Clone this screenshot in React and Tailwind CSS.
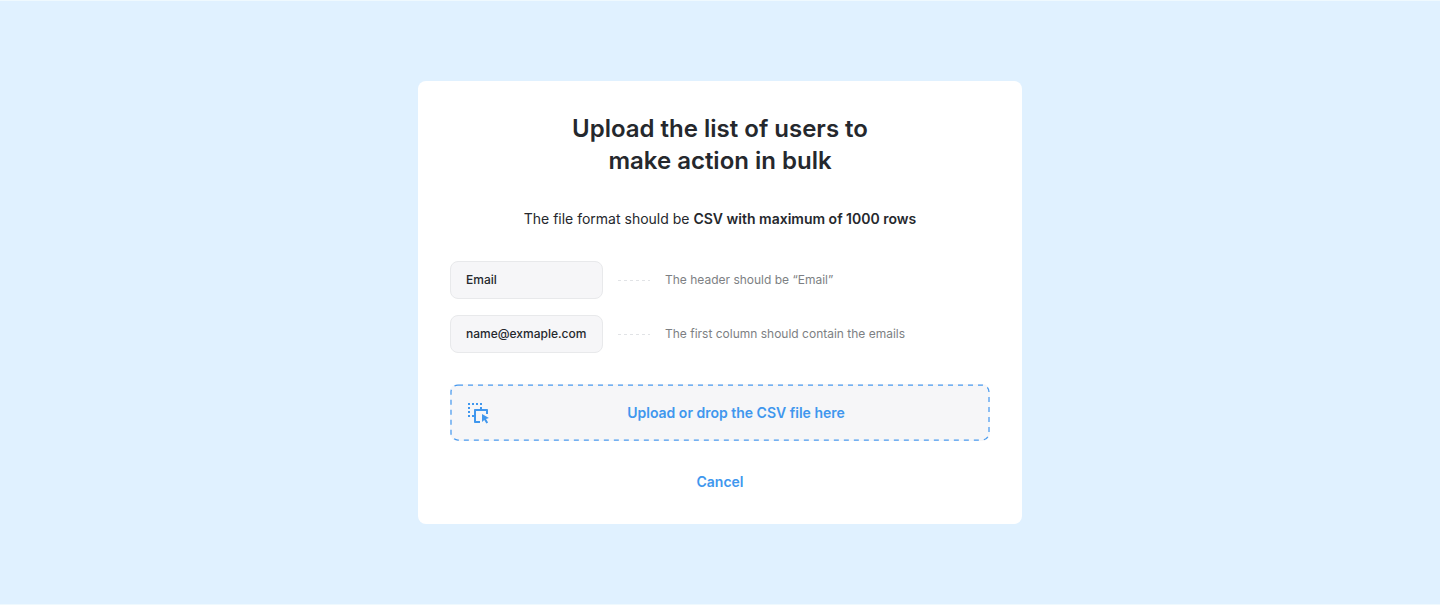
import { useRef } from "react";
import { RiDragDropLine } from "react-icons/ri";

const rows = [
  { sample: "Email", hint: "The header should be “Email”" },
  { sample: "name@exmaple.com", hint: "The first column should contain the emails" },
];

function Connector() {
  return (
    <svg className="h-px w-8 shrink-0" aria-hidden="true">
      <line x1="0" y1="0.5" x2="32" y2="0.5" stroke="#e1e3e6" strokeDasharray="3 3" />
    </svg>
  );
}

function DashedOutline() {
  return (
    <span className="pointer-events-none absolute inset-0 p-px" aria-hidden="true">
      <svg className="h-full w-full overflow-visible">
        <rect
          width="100%"
          height="100%"
          rx="7"
          fill="none"
          stroke="#4a9bef"
          strokeWidth="1.25"
          strokeDasharray="5 5"
        />
      </svg>
    </span>
  );
}

export default function App() {
  const fileInput = useRef(null);

  return (
    <main className="flex min-h-screen items-center justify-center border-y border-[#eff9fe] bg-[#e0f1ff] px-4 font-['Inter',sans-serif] text-[#25282d]">
      <section className="flex w-full max-w-[604px] flex-col rounded-lg bg-white p-8">
        <h1 className="text-center text-2xl font-semibold">
          Upload the list of users to
          <br />
          make action in bulk
        </h1>
        <p className="mt-[30px] text-center text-sm leading-6">
          The file format should be{" "}
          <strong className="font-semibold">CSV with maximum of 1000 rows</strong>
        </p>

        <ul className="mt-[30px] flex flex-col gap-4">
          {rows.map((row) => (
            <li key={row.sample} className="flex items-center gap-[15px]">
              <span className="flex h-[38px] w-[153px] shrink-0 items-center rounded-lg border border-[#e8e9eb] bg-[#f6f6f8] px-[15px] text-xs font-medium">
                {row.sample}
              </span>
              <Connector />
              <span className="text-xs text-[#7d7f83]">{row.hint}</span>
            </li>
          ))}
        </ul>

        <button
          type="button"
          onClick={() => fileInput.current?.click()}
          className="relative mt-[31px] flex h-[57px] items-center rounded-lg bg-[#f6f6f8] px-4 text-sm font-semibold text-[#4097ee]"
        >
          <DashedOutline />
          <RiDragDropLine className="size-6 shrink-0" aria-hidden="true" />
          <span className="ml-2 flex-1 text-center">Upload or drop the CSV file here</span>
        </button>
        <input ref={fileInput} type="file" accept=".csv" aria-label="CSV file" className="hidden" />

        <button type="button" className="mt-[31px] self-center text-sm font-semibold text-[#4097ee]">
          Cancel
        </button>
      </section>
    </main>
  );
}
